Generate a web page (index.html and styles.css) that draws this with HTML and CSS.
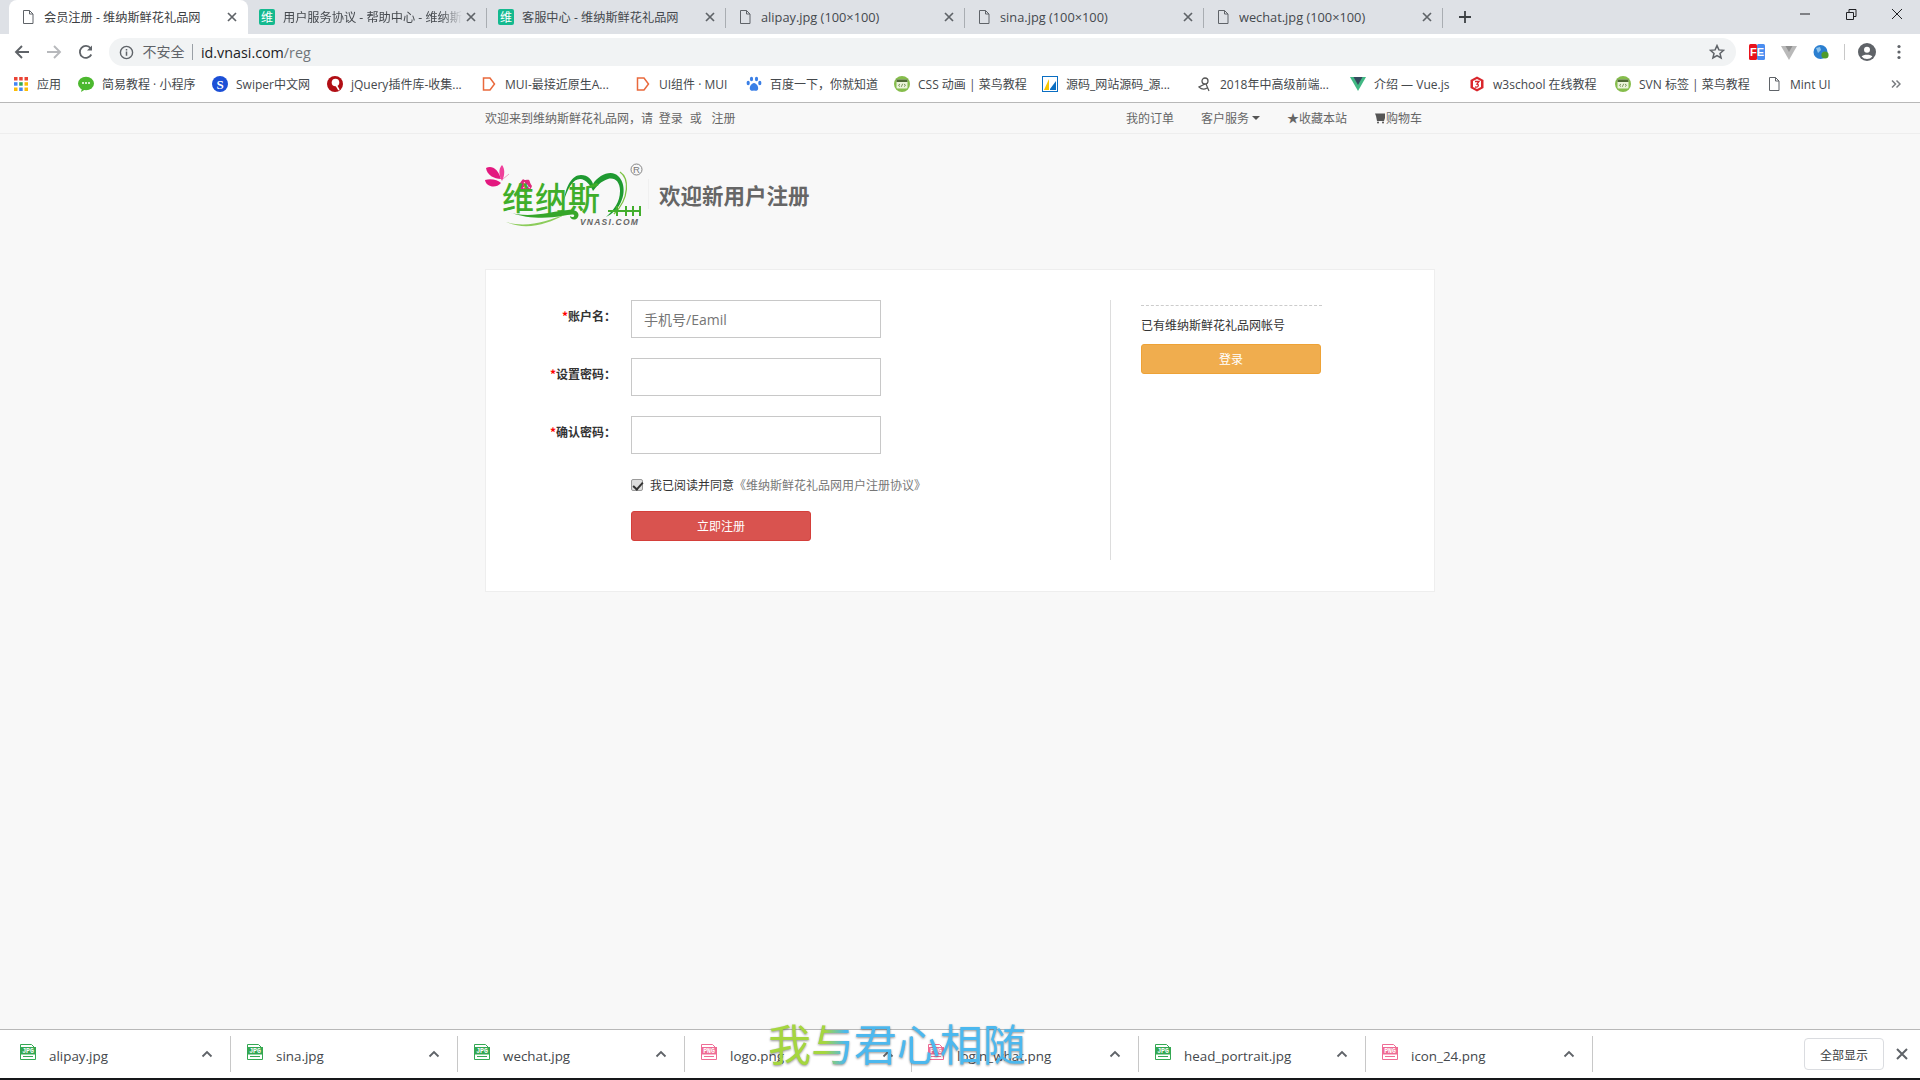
FILE: index.html
```html
<!DOCTYPE html>
<html lang="zh-CN">
<head>
<meta charset="utf-8">
<title>会员注册 - 维纳斯鲜花礼品网</title>
<link rel="stylesheet" href="styles.css">
</head>
<body>
<svg class="defs" width="0" height="0" aria-hidden="true">
  <defs>
    <symbol id="doc" viewBox="0 0 16 16"><path d="M3.500 1.500h6l3.500 3.500v9.500h-9.500z M9.500 1.500v3.500h3.500" fill="#fff" stroke="#5f6368" stroke-width="1"/></symbol>
    <symbol id="doc2" viewBox="0 0 16 16"><path d="M3.500 1.500h6l3.500 3.500v9.500h-9.500z M9.500 1.500v3.500h3.500" fill="none" stroke="#5f6368" stroke-width="1"/></symbol>
    <symbol id="x" viewBox="0 0 16 16"><path d="M4 4l8 8M12 4l-8 8" stroke="#5f6368" stroke-width="1.700" fill="none"/></symbol>
    <symbol id="fav" viewBox="0 0 16 16"><rect width="16" height="16" rx="2" fill="#14b98f"/><text x="8" y="13" class="favtag">维</text></symbol>
    <symbol id="mui" viewBox="0 0 16 16"><path d="M2.500 2h6.500l4.500 6-4.500 6h-6.500z" fill="#fff" stroke="#e9693c" stroke-width="1.500"/></symbol>
    <symbol id="cai" viewBox="0 0 16 16"><circle cx="8" cy="8" r="8" fill="#85bd4b"/><rect x="2.500" y="3.500" width="11" height="9" rx="1" fill="#eaf3d9"/><rect x="2.500" y="3.500" width="11" height="2.500" fill="#4f6a36"/><path d="M6 8l-1.500 1.300 1.500 1.300M10 8l1.500 1.300-1.500 1.300M8.700 7.800l-1.400 3" stroke="#5d7b3e" fill="none" stroke-width=".8"/></symbol>
    <symbol id="jpg" viewBox="0 0 16 16"><path d="M.5.5h11l4 4v11h-15z" fill="#fff" stroke="#34a853"/><rect y="3" width="16" height="7.500" fill="#34a853"/><text x="8" y="9.300" class="filetag">JPG</text><path d="M3 12.500h10" stroke="#34a853"/></symbol>
    <symbol id="png" viewBox="0 0 16 16"><path d="M.5.5h11l4 4v11h-15z" fill="#fff" stroke="#ef6c95"/><rect y="3" width="16" height="7.500" fill="#ef6c95"/><text x="8" y="9.300" class="filetag">PNG</text><path d="M3 12.500h10" stroke="#ef6c95"/></symbol>
    <symbol id="up" viewBox="0 0 16 16"><path d="M3.500 10.500l4.500-4.500 4.500 4.500" stroke="#5f6368" stroke-width="1.800" fill="none"/></symbol>
  </defs>
</svg>

<header class="tabstrip">
  <div class="tab active"><svg class="ico"><use href="#doc"/></svg><span class="tab-title">会员注册 - 维纳斯鲜花礼品网</span><svg class="ico"><use href="#x"/></svg></div>
  <div class="tab"><svg class="ico"><use href="#fav"/></svg><span class="tab-title fade">用户服务协议 - 帮助中心 - 维纳斯</span><svg class="ico"><use href="#x"/></svg></div>
  <div class="tab"><svg class="ico"><use href="#fav"/></svg><span class="tab-title">客服中心 - 维纳斯鲜花礼品网</span><svg class="ico"><use href="#x"/></svg></div>
  <div class="tab"><svg class="ico"><use href="#doc2"/></svg><span class="tab-title latin">alipay.jpg (100×100)</span><svg class="ico"><use href="#x"/></svg></div>
  <div class="tab"><svg class="ico"><use href="#doc2"/></svg><span class="tab-title latin">sina.jpg (100×100)</span><svg class="ico"><use href="#x"/></svg></div>
  <div class="tab"><svg class="ico"><use href="#doc2"/></svg><span class="tab-title latin">wechat.jpg (100×100)</span><svg class="ico"><use href="#x"/></svg></div>
  <svg class="newtab" viewBox="0 0 16 16"><path d="M8 2v12M2 8h12" stroke="#3c4043" stroke-width="1.800"/></svg>
  <div class="winctl">
    <svg class="winbtn" viewBox="0 0 46 28"><path d="M18 14h10" stroke="#202124"/></svg>
    <svg class="winbtn" viewBox="0 0 46 28"><path d="M18.500 12.500h7v7h-7zM21 12.500v-3h7v7h-2.500" stroke="#202124" fill="none"/></svg>
    <svg class="winbtn" viewBox="0 0 46 28"><path d="M18 9l10 10M28 9l-10 10" stroke="#202124" fill="none"/></svg>
  </div>
</header>

<nav class="toolbar">
  <svg class="navbtn back" viewBox="0 0 16 16"><path d="M15 8H2.500M8 2L2 8l6 6" stroke="#5f6368" stroke-width="1.900" fill="none"/></svg>
  <svg class="navbtn" viewBox="0 0 16 16"><path d="M1 8h12.500M8 2l6 6-6 6" stroke="#b7b9bc" stroke-width="1.900" fill="none"/></svg>
  <svg class="navbtn" viewBox="0 0 16 16"><path d="M13.300 10.500A6 6 0 1 1 12.600 4.200" stroke="#5f6368" stroke-width="1.800" fill="none"/><path d="M14 1.500v5h-5z" fill="#5f6368"/></svg>
  <div class="omnibox">
    <svg class="info" viewBox="0 0 16 16"><circle cx="8" cy="8" r="6.500" fill="none" stroke="#5f6368" stroke-width="1.500"/><path d="M8 7v4.500M8 4.200v1.600" stroke="#5f6368" stroke-width="1.600"/></svg>
    <span class="insecure">不安全</span>
    <span class="url"><span class="host">id.vnasi.com</span>/reg</span>
    <svg class="star" viewBox="0 0 16 16"><path d="M8 1.600l1.900 4.300 4.700.4-3.600 3.100 1.100 4.600L8 11.600 3.900 14l1.100-4.600-3.600-3.100 4.700-.4z" fill="none" stroke="#5f6368" stroke-width="1.500"/></svg>
  </div>
  <div class="extensions">
    <svg class="ext" viewBox="0 0 16 16"><rect width="8" height="16" rx="1.500" fill="#e8131c"/><rect x="8" width="8" height="16" rx="1.500" fill="#4a8df0"/><text x="8" y="11.800" class="fetag">FE</text></svg>
    <svg class="ext" viewBox="0 0 16 16"><path d="M0 2h16l-8 14z" fill="#b9b9b9"/><path d="M4.500 2h7l-3.500 6z" fill="#8f8f8f"/></svg>
    <svg class="ext" viewBox="0 0 16 16"><circle cx="7.500" cy="8" r="7" fill="#2b7fd0"/><path d="M3 4l4-1 1 3-3 3zM9 9l3-1 1 3-3 3z" fill="#8fc4ec"/><circle cx="12" cy="11" r="3.600" fill="#4e9a2c"/></svg>
    <span class="ext-sep"></span>
    <svg class="avatar" viewBox="0 0 18 18"><circle cx="9" cy="9" r="9" fill="#5f6368"/><circle cx="9" cy="6.800" r="3" fill="#fff"/><path d="M3.600 13.500c1.500-2.400 9.300-2.400 10.800 0a7 7 0 0 1-10.800 0z" fill="#fff"/></svg>
    <svg class="dots" viewBox="0 0 4 16"><circle cx="2" cy="2.500" r="1.600" fill="#5f6368"/><circle cx="2" cy="8" r="1.600" fill="#5f6368"/><circle cx="2" cy="13.500" r="1.600" fill="#5f6368"/></svg>
  </div>
</nav>

<nav class="bookmarks">
  <a class="bm b1"><svg class="ico" viewBox="0 0 16 16"><g><rect x="1" y="1" width="3.500" height="3.500" fill="#ea4335"/><rect x="6.200" y="1" width="3.500" height="3.500" fill="#ea4335"/><rect x="11.500" y="1" width="3.500" height="3.500" fill="#ea4335"/><rect x="1" y="6.200" width="3.500" height="3.500" fill="#4285f4"/><rect x="6.200" y="6.200" width="3.500" height="3.500" fill="#34a853"/><rect x="11.500" y="6.200" width="3.500" height="3.500" fill="#fbbc05"/><rect x="1" y="11.500" width="3.500" height="3.500" fill="#fbbc05"/><rect x="6.200" y="11.500" width="3.500" height="3.500" fill="#4285f4"/><rect x="11.500" y="11.500" width="3.500" height="3.500" fill="#fbbc05"/></g></svg><span>应用</span></a>
  <a class="bm b2"><svg class="ico" viewBox="0 0 16 16"><ellipse cx="8" cy="7.500" rx="8" ry="6.800" fill="#4cb82f"/><path d="M4 12l-1 4 4-2.500z" fill="#4cb82f"/><circle cx="5" cy="7" r="1" fill="#fff"/><circle cx="8" cy="7" r="1" fill="#fff"/><circle cx="11" cy="7" r="1" fill="#fff"/></svg><span>简易教程 · 小程序</span></a>
  <a class="bm b3"><svg class="ico" viewBox="0 0 16 16"><circle cx="8" cy="8" r="8" fill="#1c4fd6"/><text x="8" y="12.500" class="stag">S</text></svg><span>Swiper中文网</span></a>
  <a class="bm b4"><svg class="ico" viewBox="0 0 16 16"><circle cx="8" cy="8" r="8" fill="#b10e14"/><circle cx="8.500" cy="6.500" r="3.800" fill="#fff"/><path d="M9 9l3 5" stroke="#fff" stroke-width="1.500"/></svg><span>jQuery插件库-收集...</span></a>
  <a class="bm b5"><svg class="ico"><use href="#mui"/></svg><span>MUI-最接近原生A...</span></a>
  <a class="bm b6"><svg class="ico"><use href="#mui"/></svg><span>UI组件 · MUI</span></a>
  <a class="bm b7"><svg class="ico" viewBox="0 0 16 16"><g fill="#3a7fe6"><ellipse cx="5.500" cy="3" rx="1.600" ry="2.200"/><ellipse cx="10.500" cy="3" rx="1.600" ry="2.200"/><ellipse cx="2.200" cy="7" rx="1.600" ry="2.200"/><ellipse cx="13.800" cy="7" rx="1.600" ry="2.200"/><path d="M8 7c-2.500 0-5 4-4 6.500 1 2 3 1 4 1s3 1 4-1c1-2.500-1.500-6.500-4-6.500z"/></g></svg><span>百度一下，你就知道</span></a>
  <a class="bm b8"><svg class="ico"><use href="#cai"/></svg><span>CSS 动画 | 菜鸟教程</span></a>
  <a class="bm b9"><svg class="ico" viewBox="0 0 16 16"><rect x=".5" y=".5" width="15" height="15" fill="#fff" stroke="#0a6ec2"/><path d="M2 14L7 3v11z" fill="#f7c600"/><path d="M8 13l6-8v9H8z" fill="#0a6ec2"/></svg><span>源码_网站源码_源...</span></a>
  <a class="bm b10"><svg class="ico" viewBox="0 0 16 16"><circle cx="9" cy="5" r="3" fill="none" stroke="#555" stroke-width="1.300"/><path d="M10 8l3 7M9 8l-6 3c2 2 5 3 8 1" fill="none" stroke="#555" stroke-width="1.200"/></svg><span>2018年中高级前端...</span></a>
  <a class="bm b11"><svg class="ico" viewBox="0 0 16 16"><path d="M0 1h16L8 15z" fill="#41b883"/><path d="M3.500 1h9L8 9z" fill="#35495e"/></svg><span>介绍 — Vue.js</span></a>
  <a class="bm b12"><svg class="ico" viewBox="0 0 16 16"><path d="M8 .5l6.500 3.500v8L8 15.500 1.500 12V4z" fill="#d9262c"/><path d="M8 3l4 2v6l-4 2-4-2V5z" fill="#fff"/><path d="M6 5.500h4L8 8c2 0 2 4-2 3" stroke="#d9262c" stroke-width="1.300" fill="none"/></svg><span>w3school 在线教程</span></a>
  <a class="bm b13"><svg class="ico"><use href="#cai"/></svg><span>SVN 标签 | 菜鸟教程</span></a>
  <a class="bm b14"><svg class="ico"><use href="#doc2"/></svg><span>Mint UI</span></a>
  <svg class="more" viewBox="0 0 10 10"><path d="M1 1.500L4.500 5 1 8.500M5.500 1.500L9 5 5.500 8.500" fill="none" stroke="#7a7d81" stroke-width="1.500"/></svg>
</nav>

<main class="page">
  <div class="topnav">
    <div class="wrap topnav-in">
      <div class="welcome">欢迎来到维纳斯鲜花礼品网，请 <a>登录</a> <a class="or">或</a> <a>注册</a></div>
      <ul class="quick">
        <li>我的订单</li>
        <li>客户服务<i class="caret"></i></li>
        <li>★收藏本站</li>
        <li><svg class="cart" viewBox="0 0 12 12"><path d="M1 1.500h10v4.500l-1 3H3L2 4z" fill="#555"/><circle cx="4" cy="10.500" r="1" fill="#555"/><circle cx="9" cy="10.500" r="1" fill="#555"/></svg>购物车</li>
      </ul>
    </div>
  </div>

  <div class="wrap">
    <div class="brand">
      <svg class="logo" viewBox="0 0 170 72">
        <path d="M6 10C12 7 18 11 21 21 14 21 7 17 6 10z" fill="#e3187f"/>
        <path d="M22 7C25 11 25 17 22 23 19 18 18 11 22 7z" fill="#ef3f9a"/>
        <path d="M5 22C11 20 18 22 21 25 16 31 6 29 5 22z" fill="#e3187f"/>
        <path d="M23 21l6-5" stroke="#f0a0c8" stroke-width="1"/>
        <path d="M40 30c-2-5 2-7 3-9 2 2 5 0 6 1s1 4 3 6c-2 5-4 5-6 6-3 0-5-1-6-4z" fill="#df2a7c"/>
        <path d="M44 24c2 3 4 5 6 6M43 30l5-3" stroke="#fff" stroke-width=".9" fill="none"/>
        <path d="M84 42C86 28 92 17 101 17 108 17 112 22 113 26 118 18 128 13 135 16 144 20 146 34 141 44 138 51 132 56 126 59 134 52 140 44 140 33 140 23 134 19 128 21 121 23 116 29 113 33 111 28 106 21 100 21 93 21 88 30 84 42z" fill="#1f9a31"/>
        <path d="M140 14c9 6 10 26-6 42" stroke="#7cc243" stroke-width="1.300" fill="none"/>
        <text x="22" y="52" class="logo-cn">维纳斯</text>
        <path d="M23 52C45 62 68 54 88 52 96 51 100 55 98 59 96 63 90 62 90 58 92 60 95 59 94 57 90 54 62 68 23 52z" fill="#36a62a"/>
        <path d="M26 64C48 71 68 62 84 57 68 66 46 73 26 64z" fill="#8ccc5b"/>
        <path d="M128 53h32M137 48v10M146 48v10M153 48v10M160 48v10" stroke="#43ae2d" stroke-width="2" fill="none"/>
        <text x="100" y="67" class="logo-en">VNASI.COM</text>
        <circle cx="156.500" cy="11.500" r="5.500" fill="none" stroke="#777" stroke-width=".9"/>
        <text x="156.500" y="15" class="logo-r">R</text>
      </svg>
      <span class="brand-sep"></span>
      <h1>欢迎新用户注册</h1>
    </div>

    <section class="card">
      <form class="form">
        <div class="row"><label class="lab"><em>*</em>账户名：</label><input class="field" type="text" placeholder="手机号/Eamil"></div>
        <div class="row"><label class="lab"><em>*</em>设置密码：</label><input class="field" type="password"></div>
        <div class="row"><label class="lab"><em>*</em>确认密码：</label><input class="field" type="password"></div>
        <div class="agree"><input class="check" type="checkbox" checked><span>我已阅读并同意<a>《维纳斯鲜花礼品网用户注册协议》</a></span></div>
        <button class="btn btn-red" type="button">立即注册</button>
      </form>
      <aside class="side">
        <p class="side-text">已有维纳斯鲜花礼品网帐号</p>
        <button class="btn btn-orange" type="button">登录</button>
      </aside>
    </section>
  </div>
</main>

<footer class="downloads">
  <div class="dl"><svg class="dl-ico"><use href="#jpg"/></svg><span class="dl-name">alipay.jpg</span><svg class="ico"><use href="#up"/></svg></div>
  <div class="dl"><svg class="dl-ico"><use href="#jpg"/></svg><span class="dl-name">sina.jpg</span><svg class="ico"><use href="#up"/></svg></div>
  <div class="dl"><svg class="dl-ico"><use href="#jpg"/></svg><span class="dl-name">wechat.jpg</span><svg class="ico"><use href="#up"/></svg></div>
  <div class="dl"><svg class="dl-ico"><use href="#png"/></svg><span class="dl-name">logo.png</span><svg class="ico"><use href="#up"/></svg></div>
  <div class="dl"><svg class="dl-ico"><use href="#png"/></svg><span class="dl-name">login_what.png</span><svg class="ico"><use href="#up"/></svg></div>
  <div class="dl"><svg class="dl-ico"><use href="#jpg"/></svg><span class="dl-name">head_portrait.jpg</span><svg class="ico"><use href="#up"/></svg></div>
  <div class="dl"><svg class="dl-ico"><use href="#png"/></svg><span class="dl-name">icon_24.png</span><svg class="ico"><use href="#up"/></svg></div>
  <div class="dl-right">
    <button class="showall" type="button">全部显示</button>
    <svg class="dl-close" viewBox="0 0 16 16"><path d="M3 3l10 10M13 3L3 13" stroke="#5f6368" stroke-width="2"/></svg>
  </div>
</footer>
<div class="taskbar"></div>
<div class="lyric">我与君心相随</div>
</body>
</html>
```
FILE: styles.css
```css
* { box-sizing: border-box; }
html, body { margin: 0; height: 100%; overflow: hidden; }
body {
  display: flex;
  flex-direction: column;
  height: 1080px;
  position: relative;
  background: #f8f8f8;
  font-family: "Open Sans", "Noto Sans CJK SC", sans-serif;
  font-size: 12px;
  color: #333;
}
.defs { position: absolute; }
.ico { width: 16px; height: 16px; flex: none; display: block; }
.filetag { font: bold 6.500px "Liberation Mono", monospace; fill: #fff; text-anchor: middle; }
.fetag { font: bold 11px "Liberation Sans", sans-serif; fill: #fff; text-anchor: middle; }
.stag { font: bold 13px "Liberation Serif", serif; fill: #fff; text-anchor: middle; }
.favtag { font: 12px "Noto Sans CJK SC", sans-serif; fill: #fff; text-anchor: middle; }

/* tab strip */
.tabstrip {
  display: flex;
  height: 34px;
  flex: none;
  padding-left: 9px;
  background: #dee1e6;
}
.tab {
  position: relative;
  display: flex;
  align-items: center;
  width: 239px;
  height: 34px;
  padding: 0 8px 0 11px;
  color: #45494e;
  font-size: 12.200px;
}
.tab::after {
  content: "";
  position: absolute;
  right: 0;
  top: 8px;
  height: 20px;
  width: 1px;
  background: #a9adb2;
}
.tab.active { background: #fff; border-radius: 8px 8px 0 0; color: #3c4043; }
.tab.active::after { display: none; }
.tab-title {
  flex: 1;
  min-width: 0;
  margin-left: 8px;
  white-space: nowrap;
  overflow: hidden;
}
.tab-title.latin { font-size: 12.800px; }
.tab-title.fade {
  -webkit-mask-image: linear-gradient(90deg, #000 88%, transparent);
  mask-image: linear-gradient(90deg, #000 88%, transparent);
}
.newtab { width: 16px; height: 16px; margin: 9px 0 0 14px; flex: none; }
.winctl { margin-left: auto; display: flex; }
.winbtn { width: 46px; height: 28px; display: block; }

/* toolbar */
.toolbar {
  display: flex;
  align-items: center;
  height: 32px;
  flex: none;
  padding: 4px 0 0 13px;
  background: #fff;
}
.navbtn { width: 16px; height: 16px; margin-right: 16.500px; flex: none; }
.navbtn.back { margin-left: 1px; margin-right: 15.500px; }
.omnibox {
  display: flex;
  align-items: center;
  width: 1627px;
  height: 28px;
  margin-left: -2px;
  padding: 0 11px 0 10px;
  background: #f1f3f4;
  border-radius: 14px;
  font-size: 14px;
  color: #5f6368;
}
.info { width: 15px; height: 15px; flex: none; }
.insecure { margin-left: 9px; padding-right: 7px; border-right: 1px solid #9aa0a6; line-height: 16px; font-size: 14px; }
.url { margin-left: 8.500px; font-size: 14.300px; color: #70757a; }
.host { color: #202124; }
.star { width: 16px; height: 16px; margin-left: auto; }
.extensions { display: flex; align-items: center; margin-left: 13px; }
.ext { width: 16px; height: 16px; margin-right: 16px; flex: none; }
.ext-sep { width: 1px; height: 16px; background: #c8c8c8; margin: 0 13px 0 -1px; }
.avatar { width: 18px; height: 18px; flex: none; }
.dots { width: 4px; height: 16px; margin-left: 21px; flex: none; }

/* bookmarks */
.bookmarks {
  display: flex;
  align-items: center;
  height: 37px;
  flex: none;
  padding: 0 0 0 13px;
  background: #fff;
  border-bottom: 1px solid #b8b8b8;
  color: #44484c;
  font-size: 12px;
  white-space: nowrap;
}
.bm { display: flex; align-items: center; gap: 8px; flex: none; }
.b1 { width: 65px; }
.b2 { width: 134px; }
.b3 { width: 115px; }
.b4 { width: 154px; }
.b5 { width: 154px; }
.b6 { width: 111px; }
.b7 { width: 148px; }
.b8 { width: 148px; }
.b9 { width: 154px; }
.b10 { width: 154px; }
.b11 { width: 119px; }
.b12 { width: 146px; }
.b13 { width: 151px; }
.b14 { width: 100px; }
.more { width: 10px; height: 10px; flex: none; margin-left: 25px; }

/* page */
.page { flex: 1; min-height: 0; background: #f8f8f8; }
.wrap { width: 950px; margin: 0 auto; }
.topnav { height: 31px; border-bottom: 1px solid #eee; color: #666; }
.topnav-in { display: flex; justify-content: space-between; align-items: center; height: 30px; padding-right: 13px; }
.welcome a { margin-left: 2.500px; }
.welcome .or { margin: 0 4px; }
.quick { display: flex; list-style: none; margin: 0; padding: 0; gap: 27px; align-items: center; }
.quick li { display: flex; align-items: center; }
.caret { width: 0; height: 0; margin-left: 3px; border: 4px solid transparent; border-top-color: #555; border-bottom: 0; }
.cart { width: 12px; height: 12px; }

.brand { display: flex; align-items: center; height: 135px; padding: 28px 0 43px; margin-left: -5px; }
.logo { width: 170px; height: 72px; flex: none; overflow: visible; }
.logo-cn { font: 500 32px "Noto Sans CJK SC", sans-serif; fill: #3fae2a; letter-spacing: 1px; }
.logo-en { font: italic bold 8.500px "Liberation Sans", sans-serif; fill: #666; letter-spacing: 1.200px; }
.logo-r { font: 9.500px "Liberation Sans", sans-serif; fill: #777; text-anchor: middle; }
.brand-sep { width: 1px; height: 30px; margin: 0 0 0 -2px; background: #f0f0f0; }
.brand h1 { margin: 1px 0 0 10px; font-size: 21.500px; font-weight: 700; line-height: 30px; color: #666; font-family: "Noto Sans CJK SC", sans-serif; }

/* card */
.card {
  display: flex;
  width: 950px;
  height: 323px;
  padding: 30px 0 31px;
  background: #fff;
  border: 1px solid #eee;
}
.form { width: 624px; flex: none; }
.row { display: flex; margin-bottom: 20px; }
.lab { width: 130px; padding-top: 7px; line-height: 18px; text-align: right; font-weight: 700; color: #333; font-family: "Noto Sans CJK SC", sans-serif; white-space: nowrap; }
.lab em { font-style: normal; color: #f00; }
.field {
  width: 250px;
  height: 38px;
  margin-left: 15px;
  padding: 0 12px;
  border: 1px solid #c8c8c8;
  border-radius: 0;
  outline: 0;
  background: #fff;
  font: 14px "Open Sans", "Noto Sans CJK SC", sans-serif;
}
.field::placeholder { color: #757575; opacity: 1; }
.agree { display: flex; align-items: center; height: 18px; margin: 22px 0 17px 145px; }
.check {
  appearance: none;
  -webkit-appearance: none;
  position: relative;
  width: 12px;
  height: 12px;
  margin: 0 7px 0 0;
  background: #dedede;
  border: 1px solid #9a9a9a;
  border-radius: 2px;
}
.check::after {
  content: "";
  position: absolute;
  left: 3px;
  top: 0;
  width: 4px;
  height: 8px;
  border: solid #333;
  border-width: 0 2px 2px 0;
  transform: rotate(42deg);
}
.agree a { color: #777; }
.btn {
  display: block;
  width: 180px;
  height: 30px;
  padding: 0 0 2px;
  border-radius: 3px;
  font: 12px "Noto Sans CJK SC", sans-serif;
  color: #fff;
}
.btn-red { margin-left: 145px; background: #d9534f; border: 1px solid #d43f3a; }
.btn-orange { background: #f0ad4e; border: 1px solid #eea236; }
.side { flex: 1; border-left: 1px solid #ddd; padding: 5px 0 0 30px; }
.side-text { width: 181px; height: 39px; margin: 0; padding-top: 11px; line-height: 18px; border-top: 1px dashed #ccc; color: #333; }

/* downloads */
.downloads {
  display: flex;
  align-items: center;
  height: 49px;
  flex: none;
  background: #fff;
  border-top: 1px solid #b8b8b8;
}
.dl {
  display: flex;
  align-items: center;
  width: 227px;
  height: 36px;
  padding: 0 15px 0 16px;
  border-right: 1px solid #c8c8c8;
  flex: none;
}
.dl:first-child { width: 231px; padding-left: 20px; }
.dl-ico { width: 16px; height: 16px; flex: none; margin-top: -5px; }
.dl-name { flex: 1; margin: 3px 0 0 13px; font-size: 13.400px; color: #44484c; white-space: nowrap; overflow: hidden; }
.dl-right { display: flex; align-items: center; margin-left: auto; padding-right: 10px; }
.showall {
  width: 80px;
  height: 32px;
  padding: 0;
  background: #fff;
  border: 1px solid #dadce0;
  border-radius: 4px;
  font: 12px "Noto Sans CJK SC", sans-serif;
  color: #3c4043;
}
.dl-close { width: 16px; height: 16px; margin-left: 10px; }
.taskbar { height: 2px; flex: none; background: #16181a; }

/* floating lyric overlay */
.lyric {
  position: absolute;
  left: 768px;
  top: 1012px;
  font: 43px/60px "Noto Sans CJK SC", sans-serif;
  background: linear-gradient(90deg, #a5d63f 0 22%, #4cb8ee 30% 100%);
  -webkit-background-clip: text;
  background-clip: text;
  color: transparent;
  filter: drop-shadow(0 1px 1px rgba(60, 60, 60, .55));
  pointer-events: none;
}
```
